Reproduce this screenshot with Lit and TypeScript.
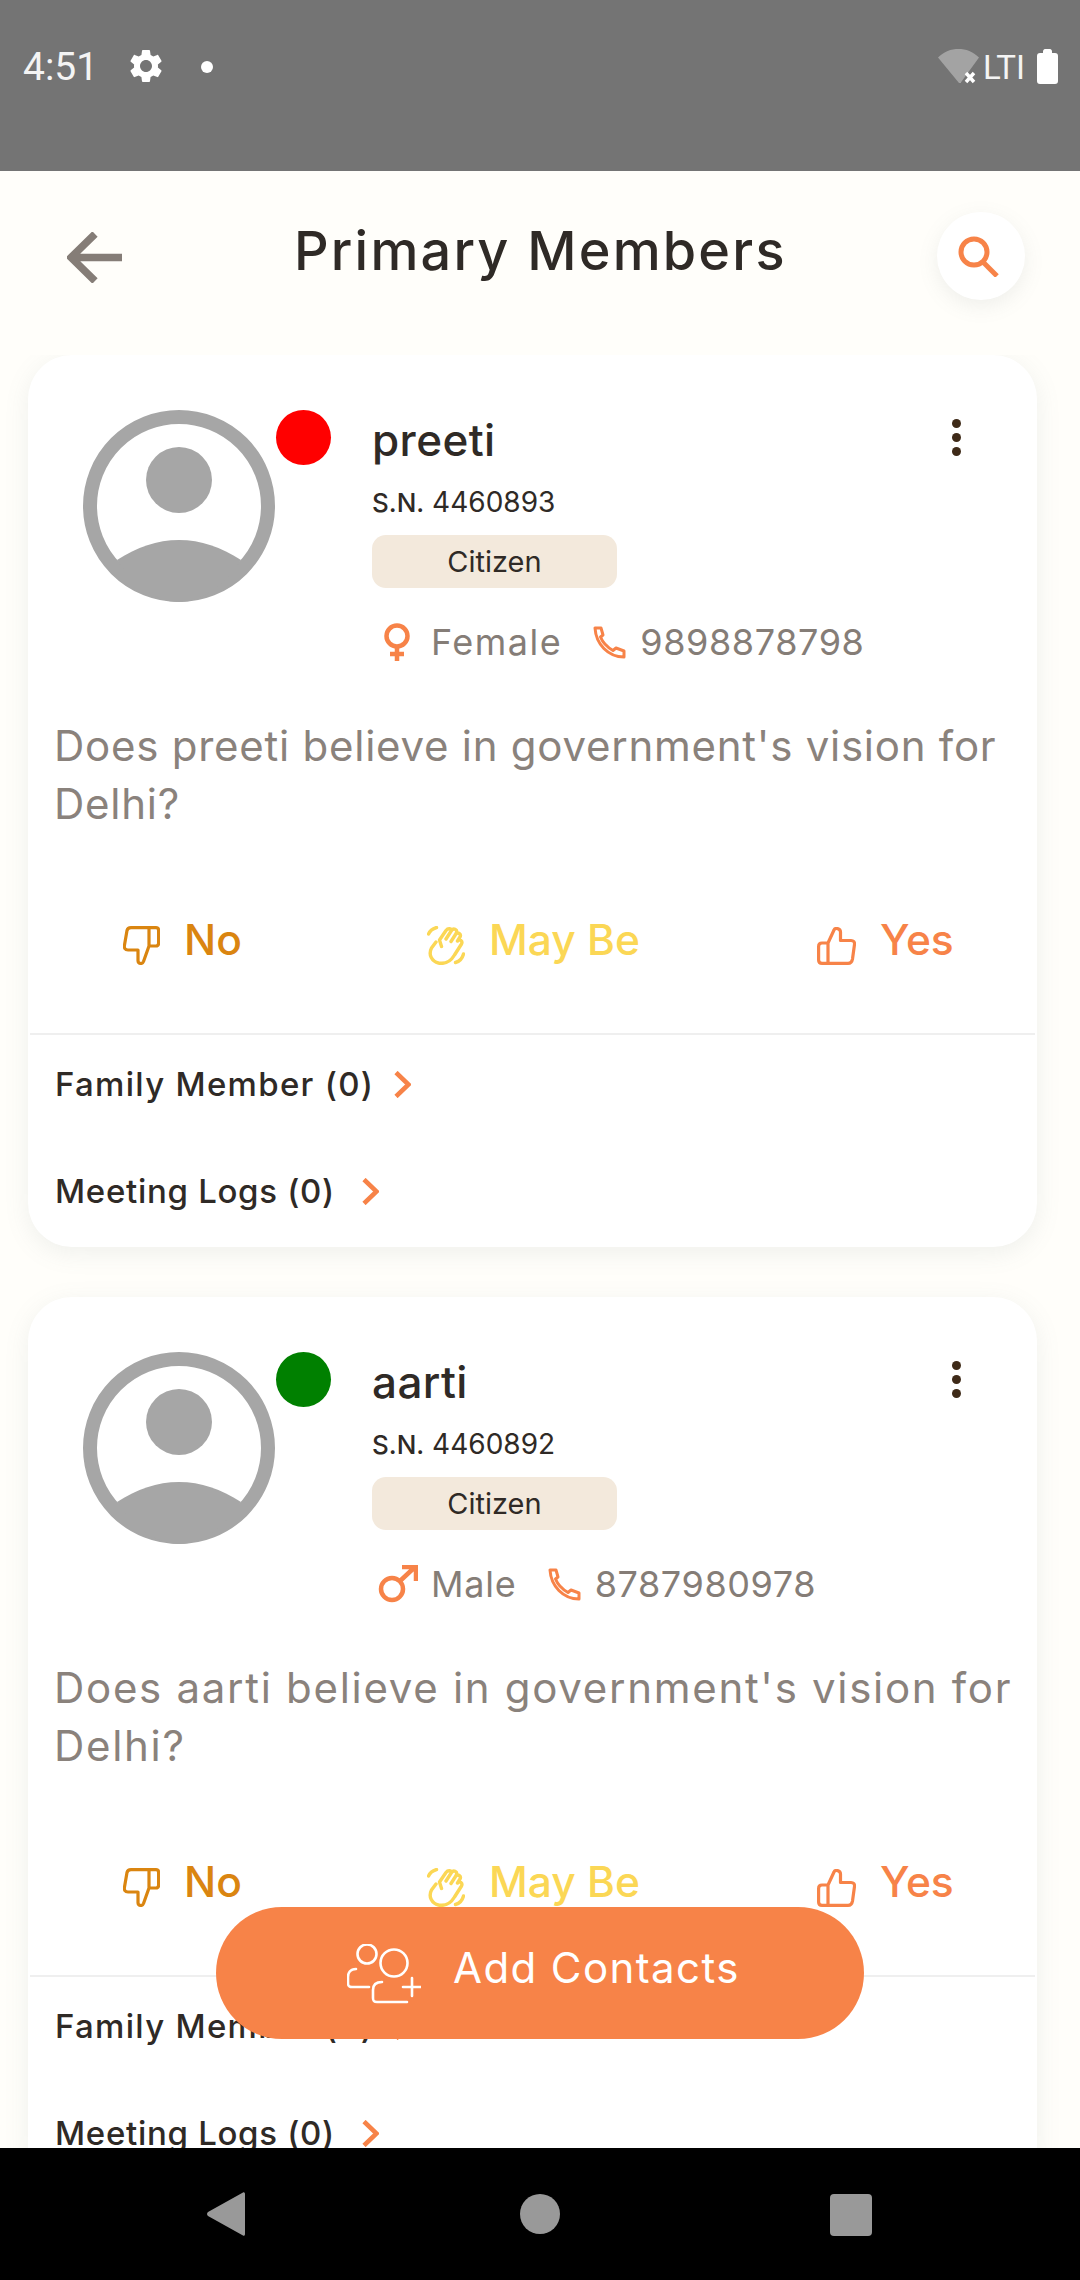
import { LitElement, html, css, svg } from "lit";
import { customElement } from "lit/decorators.js";

const GEAR = "M19.14 12.94c.04-.3.06-.61.06-.94 0-.32-.02-.64-.07-.94l2.03-1.58c.18-.14.23-.41.12-.61l-1.92-3.32c-.12-.22-.37-.29-.59-.22l-2.39.96c-.5-.38-1.03-.7-1.62-.94l-.36-2.54c-.04-.24-.24-.41-.48-.41h-3.84c-.24 0-.43.17-.47.41l-.36 2.54c-.59.24-1.13.57-1.62.94l-2.39-.96c-.22-.08-.47 0-.59.22L2.74 8.87c-.12.21-.08.47.12.61l2.03 1.58c-.05.3-.09.63-.09.94s.02.64.07.94l-2.03 1.58c-.18.14-.23.41-.12.61l1.92 3.32c.12.22.37.29.59.22l2.39-.96c.5.38 1.03.7 1.62.94l.36 2.54c.05.24.24.41.48.41h3.84c.24 0 .44-.17.47-.41l.36-2.54c.59-.24 1.13-.56 1.62-.94l2.39.96c.22.08.47 0 .59-.22l1.92-3.32c.12-.22.07-.47-.12-.61l-2.01-1.58zM12 15.6c-1.98 0-3.6-1.62-3.6-3.6s1.62-3.6 3.6-3.6 3.6 1.62 3.6 3.6-1.62 3.6-3.6 3.6z";

const members = [
  { name: "preeti", sn: "4460893", dot: "#ff0000", gender: "Female", phone: "9898878798", qls: 0.75 },
  { name: "aarti", sn: "4460892", dot: "#008000", gender: "Male", phone: "8787980978", qls: 1.7 },
];

const femaleIcon = svg`<svg class="gicon" width="30" height="38" viewBox="0 0 30 38" fill="none" stroke="#f78348" stroke-width="4.5"><circle cx="15" cy="13" r="10.5"/><path d="M15 24V38M8 31H22"/></svg>`;
const maleIcon = svg`<svg class="gicon" width="40" height="38" viewBox="0 0 40 38" fill="none" stroke="#f78348" stroke-width="4.5"><circle cx="14" cy="24" r="11"/><path d="M22 16L37 2M24 2H38V16"/></svg>`;
const phoneIcon = svg`<svg width="33" height="33" viewBox="0 0 33 33" fill="none" stroke="#f78348" stroke-width="3" stroke-linejoin="round"><path d="M2 2L8 2L10 9L7.5 11C9.5 16 14 21 20 24.5L23 22L31 25L31 31C15 31 3 18 2 2Z"/></svg>`;
const downIcon = svg`<svg width="37" height="39" viewBox="0 0 37 39" fill="none" stroke="#da8510" stroke-width="3.2" stroke-linejoin="round"><path d="M26 1.6V20L20.5 35.5C19.3 38.5 15 38 15 34.5V24H5C2 24 .9 22 1.5 19L4 4.5C4.5 2.5 6 1.6 8 1.6H33C35 1.6 35.6 3 35.6 4.5V17C35.6 19 35 20 33 20H26"/></svg>`;
const upIcon = svg`<svg width="39" height="38" viewBox="0 0 39 38" fill="none" stroke="#f78348" stroke-width="3.2" stroke-linejoin="round"><path d="M11 36.4V16L17 3C18 .5 23.5 1 23.5 5V13.5H34C36.5 13.5 37.8 15 37.5 17.5L35.5 32C35 35 33.5 36.4 31 36.4H5C2.5 36.4 1.6 35 1.6 33V19.5C1.6 17 2.8 16 5 16H11"/></svg>`;
const handIcon = svg`<svg width="38" height="39" viewBox="0 0 38 39" fill="none" stroke="#fbd755" stroke-width="3.4" stroke-linecap="round" stroke-linejoin="round"><path d="M1.5 8C3 4.5 6 2.5 9.5 1.5M36.5 28C35.5 32 32.5 35.5 28.5 36.5"/><path d="M9 16L4.5 22C1 29 5 35.5 11.5 37C19 38.5 24.5 34 27.5 29L34.5 18C36 15 32.5 12.5 30.5 15M30.5 15L33 11C34.5 8 31 5.5 28.5 8.5L24 15.5M28.5 8.5L29.5 6.5C30.5 3.5 26.5 1.5 24.5 4.5L19 13M24.5 4.5C24 2.5 21 2 19 4.5L12.5 14L14.5 20.5"/></svg>`;
const chevron = svg`<svg width="17" height="27" viewBox="0 0 17 27" fill="none" stroke="#f78348" stroke-width="4.6"><path d="M2 1.5L14.5 13.5L2 25.5"/></svg>`;
const avatar = svg`<svg width="192" height="192" viewBox="0 0 192 192"><circle cx="96" cy="96" r="89" fill="#fff" stroke="#a6a6a6" stroke-width="14"/><circle cx="96" cy="70" r="33" fill="#a6a6a6"/><path d="M34 150C54 137 74 130 96 130C118 130 138 137 158 150C142 174 120 192 96 192C72 192 50 174 34 150Z" fill="#a6a6a6"/></svg>`;

@customElement("member-card")
class MemberCard extends LitElement {
  static properties = { data: { attribute: false } };
  data: any;
  static styles = css`
    :host { display: block; }
    .card {
      background: #fff; border-radius: 44px; padding: 55px 0 34px;
      box-shadow: 0 6px 24px rgba(120, 140, 140, 0.12);
    }
    .top { display: flex; align-items: flex-start; padding-left: 55px; }
    .avatar { position: relative; width: 192px; height: 192px; flex: none; }
    .avatar svg { display: block; }
    .dot { position: absolute; left: 193px; top: 0; width: 55px; height: 55px; border-radius: 50%; }
    .info { margin-left: 97px; flex: 1; position: relative; }
    .more { position: absolute; right: 76px; top: 9px; display: flex; flex-direction: column; gap: 5px; }
    .more i { display: block; width: 9px; height: 9px; border-radius: 50%; background: #3e2a18; }
    .name { font: 500 44px/60px var(--f); letter-spacing: 0.4px; color: #2f2a26; }
    .sn { margin-top: 14px; font: 400 28px/36px var(--f); color: #2f2a26; }
    .sn b { font-weight: 500; font-size: 26px; }
    .chip {
      margin-top: 14px; width: 245px; height: 53px; border-radius: 14px; background: #f3e9dc;
      display: flex; align-items: center; justify-content: center;
      font: 400 29px/53px var(--f); color: #2f2a26;
    }
    .meta { margin-top: 30px; display: flex; align-items: center; height: 48px; font: 400 36px/48px var(--f); letter-spacing: 0.6px; color: #857d77; }
    .meta .gicon { margin-left: 10px; }
    .meta .g { display: flex; align-items: center; }
    .female { letter-spacing: 1.5px; }
    .male { letter-spacing: 0.8px; }
    .female .gicon { margin-right: 19px; }
    .male .gicon { margin-left: 6px; margin-right: 13px; }
    .meta .p { display: flex; align-items: center; gap: 14px; margin-left: 31px; }
    .q { margin: 51px 0 0 26px; font: 400 42px/58px var(--f); color: #8a827c; }
    .actions { margin-top: 77px; padding-left: 95px; display: grid; grid-template-columns: 304px 390px auto; height: 60px; align-items: center; }
    .a { display: flex; align-items: center; gap: 24px; font: 500 42.5px/60px var(--f); }
    .a svg { flex: none; }
    .a span { margin-bottom: 11px; }
    .no { color: #da8510; }
    .maybe { color: #fbd755; }
    .yes { color: #f78348; }
    hr { margin: 63px 2px 0; border: 0; height: 2px; background: #efefef; }
    .link { display: flex; align-items: center; padding-left: 27px; height: 44px; font: 500 33px/44px var(--f); color: #2f2a26; }
    .l1 { margin-top: 27px; gap: 20px; letter-spacing: 1.3px; }
    .l2 { margin-top: 63px; gap: 27px; letter-spacing: 0.7px; }
  `;
  render() {
    const d = this.data;
    return html`<div class="card">
      <div class="top">
        <div class="avatar">${avatar}<span class="dot" style="background:${d.dot}"></span></div>
        <div class="info">
          <div class="more"><i></i><i></i><i></i></div>
          <div class="name">${d.name}</div>
          <div class="sn"><b>S.N.</b> ${d.sn}</div>
          <div class="chip">Citizen</div>
          <div class="meta">
            <span class="g ${d.gender === "Female" ? "female" : "male"}">${d.gender === "Female" ? femaleIcon : maleIcon}${d.gender}</span>
            <span class="p">${phoneIcon}${d.phone}</span>
          </div>
        </div>
      </div>
      <div class="q" style="letter-spacing:${d.qls}px">Does ${d.name} believe in government's vision for Delhi?</div>
      <div class="actions">
        <div class="a no">${downIcon}<span>No</span></div>
        <div class="a maybe">${handIcon}<span>May Be</span></div>
        <div class="a yes">${upIcon}<span>Yes</span></div>
      </div>
      <hr />
      <div class="link l1"><span>Family Member (0)</span>${chevron}</div>
      <div class="link l2"><span>Meeting Logs (0)</span>${chevron}</div>
    </div>`;
  }
}

@customElement("app-root")
class AppRoot extends LitElement {
  static styles = css`
    :host {
      display: block; width: 1080px; height: 2280px; position: relative; overflow: hidden;
      background: #fffefa; --f: "Inter", "Open Sans", sans-serif;
    }
    .page { width: 1080px; height: 2280px; display: flex; flex-direction: column; }
    .status { height: 171px; flex: none; background: #747474; display: flex; align-items: flex-start; padding: 49px 22px 0 23px; box-sizing: border-box; color: #fff; }
    .time { font: 400 39px/36px "Roboto", sans-serif; margin-top: 0; width: 69px; color: #f4f4f4; }
    .gear { margin: -3px 0 0 34px; }
    .sdot { width: 12px; height: 12px; border-radius: 50%; background: #fff; margin: 12px 0 0 35px; }
    .sright { margin-left: auto; display: flex; align-items: flex-start; }
    .lte { font: 400 33px/30px "Roboto", sans-serif; width: 38px; white-space: nowrap; margin: 4px 0 0 4px; color: #f4f4f4; }
    .batt { margin: 0 0 0 16px; }
    header { height: 184px; flex: none; display: flex; align-items: flex-start; position: relative; }
    .back { margin: 61px 0 0 67px; flex: none; }
    h1 { margin: 45px 0 0 172px; font: 500 54px/70px var(--f); letter-spacing: 2.2px; color: #2f2a26; white-space: nowrap; }
    .search {
      position: absolute; left: 937px; top: 41px; width: 88px; height: 88px; border-radius: 50%;
      background: #fff; box-shadow: 0 6px 20px rgba(120, 130, 130, 0.12);
      display: flex; align-items: center; justify-content: center;
    }
    .search svg { margin-right: 6px; }
    .list { flex: 1; min-height: 0; overflow: hidden; padding: 0 43px 0 28px; display: flex; flex-direction: column; gap: 50px; }
    member-card { flex: none; }
    nav { height: 132px; flex: none; background: #000; position: relative; }
    .navrow { display: flex; align-items: flex-start; padding: 44px 0 0 207px; }
    .nc { width: 40px; height: 40px; border-radius: 50%; background: #999; margin: 2px 0 0 275px; }
    .ns { width: 42px; height: 42px; border-radius: 4px; background: #999; margin: 2px 0 0 270px; }
    .fab {
      position: absolute; left: 216px; top: 1907px; width: 648px; height: 132px; border-radius: 66px; background: #f78348;
      display: flex; align-items: center; box-sizing: border-box; padding-left: 131px; gap: 32px;
      color: #fff; font: 400 42px/60px var(--f); letter-spacing: 1.4px;
    }
    .fab svg { margin-top: 2px; }
    .fab span { margin-bottom: 10px; }
  `;
  render() {
    return html`<div class="page">
        <div class="status">
          <span class="time">4:51</span>
          <svg class="gear" width="40" height="40" viewBox="0 0 24 24" fill="#fff"><path d="${GEAR}"/></svg>
          <span class="sdot"></span>
          <div class="sright">
            <svg width="41" height="35" viewBox="0 0 41 35"><path d="M0 8.5C6 2.5 13 0 20.5 0S35 2.5 41 8.5L22.5 34H21V22H23V34L21 34Z" fill="#a3a3a3"/><path d="M28 24L36 33M36 24L28 33" stroke="#fff" stroke-width="3.4" fill="none"/></svg>
            <span class="lte">LTI</span>
            <svg class="batt" width="21" height="35" viewBox="0 0 21 35"><path d="M6 2.5C6 1 7 0 8 0H13C14 0 15 1 15 2.5V4H18C20 4 21 5 21 7V32C21 34 20 35 18 35H3C1 35 0 34 0 32V7C0 5 1 4 3 4H6Z" fill="#fff"/></svg>
          </div>
        </div>
        <header>
          <svg class="back" width="55" height="51" viewBox="0 0 55 51" fill="none" stroke="#857d77" stroke-width="7.5"><path d="M55 25.5H6M28 2L4 25.5L28 49"/></svg>
          <h1>Primary Members</h1>
          <div class="search">
            <svg width="41" height="41" viewBox="0 0 41 41" fill="none" stroke="#f78348" stroke-width="5"><circle cx="16" cy="16" r="13"/><path d="M25 26L39 40"/></svg>
          </div>
        </header>
        <div class="list">
          ${members.map((m) => html`<member-card .data=${m}></member-card>`)}
        </div>
        <nav>
          <div class="navrow">
            <svg width="38" height="44" viewBox="0 0 38 44" fill="#999"><path d="M36 .5C37 -.3 38 .5 38 2V42C38 43.5 37 44.3 36 43.5L1 24C-.3 23 -.3 21 1 20Z"/></svg>
            <span class="nc"></span>
            <span class="ns"></span>
          </div>
        </nav>
      </div>
      <div class="fab">
        <svg width="74" height="60" viewBox="0 0 74 60" fill="none" stroke="#fff" stroke-width="2.6" stroke-linecap="round"><circle cx="20" cy="10" r="9.5"/><circle cx="47" cy="19" r="13.5"/><path d="M9 25C3 25 1 29 1 33V39C1 42 2 43 5 43H22"/><path d="M35 38C28 38 26 42 26 46V54C26 57 27 58 30 58H60"/><path d="M65 34V52M56 43H74"/></svg>
        <span>Add Contacts</span>
      </div>`;
  }
}
